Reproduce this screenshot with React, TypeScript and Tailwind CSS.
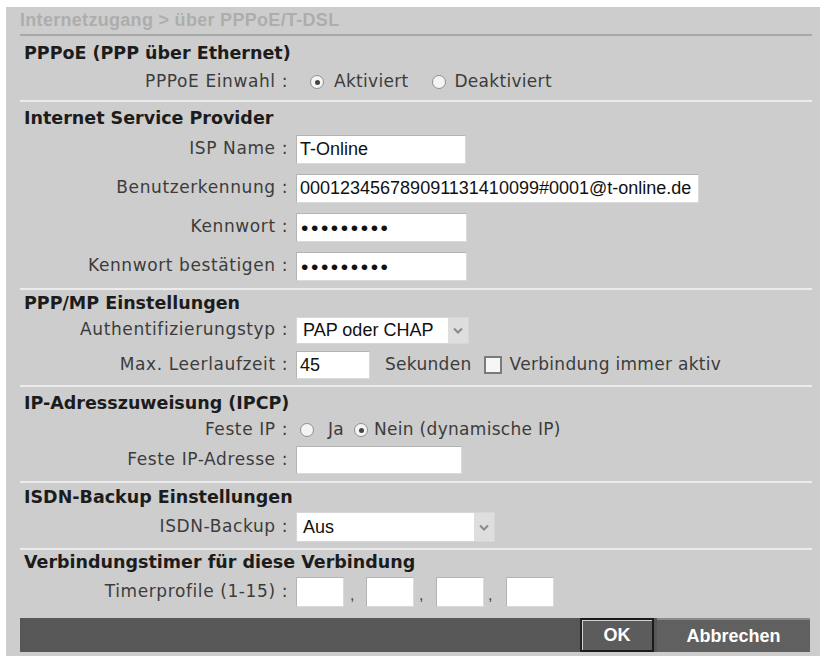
import React from "react";

const labelFont = { fontFamily: '"DejaVu Sans", Verdana, sans-serif' };
const inputFont = { fontFamily: '"Liberation Sans", Arial, sans-serif' };

const Radio: React.FC<{ checked?: boolean }> = ({ checked }) => (
  <span className="flex h-[14px] w-[14px] items-center justify-center rounded-full border border-[#8f8f8f] bg-[#f4f4f4]">
    {checked && <span className="h-[5px] w-[5px] rounded-full bg-[#444]" />}
  </span>
);

const Label: React.FC<{ children: React.ReactNode }> = ({ children }) => (
  <div
    className="w-[268px] shrink-0 text-right text-[17px] tracking-[0.6px] text-[#3c3c3c]"
    style={labelFont}
  >
    {children}
  </div>
);

const Heading: React.FC<{ children: React.ReactNode; h: string }> = ({
  children,
  h,
}) => (
  <div
    className={`flex items-center pl-[4px] text-[17.5px] font-bold text-[#1c1c1c] ${h}`}
    style={labelFont}
  >
    {children}
  </div>
);

const TextBox: React.FC<{ value?: string; w: string; h?: string }> = ({
  value,
  w,
  h = "h-[29px]",
}) => (
  <div
    className={`flex items-center border border-[#b4b4b4] border-b-[#dadada] border-r-[#dadada] bg-white pl-[3px] text-[18px] text-[#111] ${w} ${h}`}
    style={inputFont}
  >
    {value}
  </div>
);

const Dots = () => (
  <div
    className="flex h-[29px] w-[171px] items-center border border-[#b4b4b4] border-b-[#dadada] border-r-[#dadada] bg-white pl-[4px] text-[21px] leading-none tracking-[2.6px] text-[#111]"
    style={inputFont}
  >
    •••••••••
  </div>
);

const Select: React.FC<{ value: string; w: string; h: string }> = ({
  value,
  w,
  h,
}) => (
  <div
    className={`flex items-stretch border border-[#d6d6d6] bg-white text-[18px] text-[#111] ${w} ${h}`}
    style={inputFont}
  >
    <div className="flex flex-1 items-center pl-[6px]">{value}</div>
    <div className="flex w-[20px] items-center justify-center bg-[#dedede]">
      <svg width="10" height="7" viewBox="0 0 10 7">
        <path d="M1 1.5 L5 5.5 L9 1.5" stroke="#8a8a8a" strokeWidth="2" fill="none" />
      </svg>
    </div>
  </div>
);

const Sep = () => <div className="h-[2px] bg-[#ececec]" />;

export default function App() {
  return (
    <div className="min-h-screen bg-white pl-[6px] pt-[7px]">
      <div className="w-[814px] bg-[#cdcdcd] pl-[14px] pr-[8px] pb-[6px]">
        <div
          className="flex h-[27px] items-center text-[18px] font-bold tracking-[0.3px] text-[#adadad]"
          style={inputFont}
        >
          Internetzugang &gt; über PPPoE/T-DSL
        </div>
        <div className="h-[2px] bg-[#a8a8a8]" />

        <Heading h="h-[34px]">PPPoE (PPP über Ethernet)</Heading>
        <div className="flex h-[24px] items-center gap-[8px]">
          <Label>PPPoE Einwahl :</Label>
          <div
            className="flex items-center text-[17px] tracking-[0.3px] text-[#3c3c3c]"
            style={labelFont}
          >
            <span className="ml-[14px] mr-[10px] flex">
              <Radio checked />
            </span>
            Aktiviert
            <span className="ml-[24px] mr-[8px] flex">
              <Radio />
            </span>
            Deaktiviert
          </div>
        </div>
        <div className="h-[6px]" />
        <Sep />

        <Heading h="h-[32px]">Internet Service Provider</Heading>
        <div className="flex flex-col gap-[9px]">
          <div className="flex h-[30px] items-center gap-[8px]">
            <Label>ISP Name :</Label>
            <TextBox value="T-Online" w="w-[170px]" />
          </div>
          <div className="flex h-[30px] items-center gap-[8px]">
            <Label>Benutzerkennung :</Label>
            <TextBox value="000123456789091131410099#0001@t-online.de" w="w-[403px]" />
          </div>
          <div className="flex h-[30px] items-center gap-[8px]">
            <Label>Kennwort :</Label>
            <Dots />
          </div>
          <div className="flex h-[30px] items-center gap-[8px]">
            <Label>Kennwort bestätigen :</Label>
            <Dots />
          </div>
        </div>
        <div className="h-[7px]" />
        <Sep />

        <Heading h="h-[26px]">PPP/MP Einstellungen</Heading>
        <div className="flex h-[28px] items-center gap-[8px]">
          <Label>Authentifizierungstyp :</Label>
          <Select value="PAP oder CHAP" w="w-[173px]" h="h-[27px]" />
        </div>
        <div className="h-[7px]" />
        <div className="flex h-[28px] items-center gap-[8px]">
          <Label>Max. Leerlaufzeit :</Label>
          <TextBox value="45" w="w-[74px]" h="h-[28px]" />
          <div
            className="ml-[7px] flex items-center text-[17px] tracking-[0.3px] text-[#3c3c3c]"
            style={labelFont}
          >
            Sekunden
            <span className="ml-[12px] mr-[8px] h-[18px] w-[18px] border-2 border-[#7a7a7a] bg-[#f6f6f6]" />
            Verbindung immer aktiv
          </div>
        </div>
        <div className="h-[6px]" />
        <Sep />

        <Heading h="h-[33px]">IP-Adresszuweisung (IPCP)</Heading>
        <div className="flex h-[20px] items-center gap-[8px]">
          <Label>Feste IP :</Label>
          <div
            className="flex items-center text-[17px] tracking-[0.3px] text-[#3c3c3c]"
            style={labelFont}
          >
            <span className="ml-[4px] mr-[14px] flex">
              <Radio />
            </span>
            Ja
            <span className="ml-[10px] mr-[6px] flex">
              <Radio checked />
            </span>
            Nein (dynamische IP)
          </div>
        </div>
        <div className="h-[6px]" />
        <div className="flex h-[28px] items-center gap-[8px]">
          <Label>Feste IP-Adresse :</Label>
          <TextBox w="w-[166px]" h="h-[28px]" />
        </div>
        <div className="h-[7px]" />
        <Sep />

        <Heading h="h-[28px]">ISDN-Backup Einstellungen</Heading>
        <div className="flex h-[32px] items-center gap-[8px]">
          <Label>ISDN-Backup :</Label>
          <Select value="Aus" w="w-[199px]" h="h-[30px]" />
        </div>
        <div className="h-[5px]" />
        <Sep />

        <Heading h="h-[24px]">Verbindungstimer für diese Verbindung</Heading>
        <div className="h-[3px]" />
        <div className="flex h-[30px] items-center gap-[8px]">
          <Label>Timerprofile (1-15) :</Label>
          <div className="flex items-end text-[16px] text-[#444]" style={inputFont}>
            <TextBox w="w-[48px]" h="h-[30px]" />
            <span className="w-[22px] pl-[6px]">,</span>
            <TextBox w="w-[48px]" h="h-[30px]" />
            <span className="w-[22px] pl-[5px]">,</span>
            <TextBox w="w-[48px]" h="h-[30px]" />
            <span className="w-[22px] pl-[4px]">,</span>
            <TextBox w="w-[48px]" h="h-[30px]" />
          </div>
        </div>
        <div className="h-[11px]" />

        <div
          className="mr-[2px] flex h-[34px] justify-end bg-[#575757] text-[18px] font-bold text-white"
          style={inputFont}
        >
          <div className="flex w-[74px] items-center justify-center border-2 border-[#1a1a1a] border-l-[#222] bg-[#5c5c5c] shadow-[inset_1px_1px_0_#d0d0d0]">
            OK
          </div>
          <div className="ml-[3px] flex w-[153px] items-center justify-center border-t-2 border-[#8a8a8a] bg-[#606060]">
            Abbrechen
          </div>
        </div>
      </div>
    </div>
  );
}
